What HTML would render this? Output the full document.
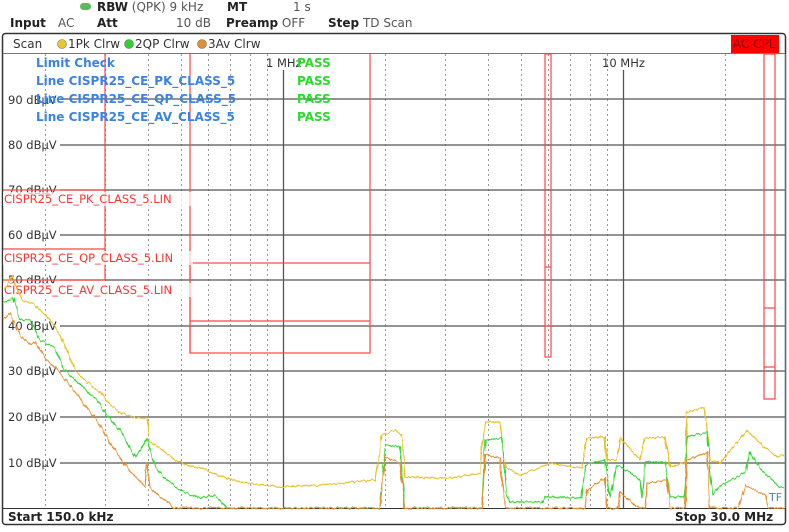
<!DOCTYPE html>
<html><head><meta charset="utf-8"><style>
body{margin:0;background:#fff;width:789px;height:527px;overflow:hidden;font-family:"Liberation Sans","DejaVu Sans",sans-serif}
</style></head><body>
<svg width="789" height="527" viewBox="0 0 789 527" xmlns="http://www.w3.org/2000/svg" font-family="DejaVu Sans, Liberation Sans, sans-serif">
<defs>
<filter id="n" x="-5%" y="-5%" width="110%" height="110%">
<feTurbulence type="fractalNoise" baseFrequency="0.35 0.05" numOctaves="2" seed="3"/>
<feDisplacementMap in="SourceGraphic" scale="4" xChannelSelector="B" yChannelSelector="R"/>
</filter>
</defs>
<rect width="789" height="527" fill="#fff"/>
<!-- header -->
<rect x="80" y="3" width="11" height="7" rx="3.5" fill="#5cb85c"/>
<g font-size="12" fill="#222">
<text x="97" y="11"><tspan font-weight="bold">RBW</tspan> <tspan fill="#555">(QPK) 9 kHz</tspan></text>
<text x="227" y="11" font-weight="bold">MT</text>
<text x="293" y="11" fill="#555">1 s</text>
<text x="10" y="27" font-weight="bold">Input</text>
<text x="58" y="27" fill="#555">AC</text>
<text x="97" y="27" font-weight="bold">Att</text>
<text x="176" y="27" fill="#555">10 dB</text>
<text x="226" y="27"><tspan font-weight="bold">Preamp</tspan> <tspan fill="#555">OFF</tspan></text>
<text x="328" y="27"><tspan font-weight="bold">Step</tspan> <tspan fill="#555">TD Scan</tspan></text>
</g>
<!-- frame -->
<rect x="2.5" y="33.5" width="783" height="491" rx="3" fill="none" stroke="#333" stroke-width="1.5"/>
<line x1="3" y1="53.5" x2="785" y2="53.5" stroke="#777"/>
<line x1="3" y1="508.5" x2="785" y2="508.5" stroke="#333"/>
<line x1="785" y1="54" x2="785" y2="508" stroke="#8ab" />
<text x="13" y="48" font-size="12" fill="#333">Scan</text>
<circle cx="62" cy="44" r="4.5" fill="#e8c830" stroke="#777" stroke-width=".6"/>
<text x="68" y="48" font-size="12" fill="#333">1Pk Clrw</text>
<circle cx="129" cy="44" r="4.5" fill="#30d030" stroke="#777" stroke-width=".6"/>
<text x="135" y="48" font-size="12" fill="#333">2QP Clrw</text>
<circle cx="202" cy="44" r="4.5" fill="#e09030" stroke="#777" stroke-width=".6"/>
<text x="208" y="48" font-size="12" fill="#333">3Av Clrw</text>
<rect x="731" y="35" width="48" height="18" fill="#f00"/>
<text x="733" y="48" font-size="12" fill="#800">AC CPL</text>
<!-- dotted verticals -->
<g stroke="#999" stroke-dasharray="2,3" stroke-width="1">
<line x1="45.5" y1="54" x2="45.5" y2="508"/><line x1="105.5" y1="54" x2="105.5" y2="508"/>
<line x1="148.5" y1="54" x2="148.5" y2="508"/><line x1="181.5" y1="54" x2="181.5" y2="508"/>
<line x1="208.5" y1="54" x2="208.5" y2="508"/><line x1="230.5" y1="54" x2="230.5" y2="508"/>
<line x1="250.5" y1="54" x2="250.5" y2="508"/><line x1="267.5" y1="54" x2="267.5" y2="508"/>
<line x1="385.5" y1="54" x2="385.5" y2="508"/><line x1="445.5" y1="54" x2="445.5" y2="508"/>
<line x1="488.5" y1="54" x2="488.5" y2="508"/><line x1="521.5" y1="54" x2="521.5" y2="508"/>
<line x1="548.5" y1="54" x2="548.5" y2="508"/><line x1="570.5" y1="54" x2="570.5" y2="508"/>
<line x1="590.5" y1="54" x2="590.5" y2="508"/><line x1="607.5" y1="54" x2="607.5" y2="508"/>
<line x1="725.5" y1="54" x2="725.5" y2="508"/>
</g>
<!-- solid grid -->
<g stroke="#555" stroke-width="1.3">
<line x1="60" y1="99" x2="785" y2="99"/><line x1="60" y1="145" x2="785" y2="145"/>
<line x1="60" y1="190" x2="785" y2="190"/><line x1="60" y1="235" x2="785" y2="235"/>
<line x1="60" y1="280" x2="785" y2="280"/><line x1="60" y1="326" x2="785" y2="326"/>
<line x1="60" y1="371" x2="785" y2="371"/><line x1="60" y1="417" x2="785" y2="417"/>
<line x1="60" y1="463" x2="785" y2="463"/>
<line x1="283.5" y1="70" x2="283.5" y2="508"/><line x1="623.5" y1="70" x2="623.5" y2="508"/>
</g>
<g font-size="11.5" fill="#333">
<text x="8" y="104">90 dBµV</text><text x="8" y="149">80 dBµV</text>
<text x="8" y="194">70 dBµV</text><text x="8" y="239">60 dBµV</text>
<text x="8" y="284">50 dBµV</text><text x="8" y="330">40 dBµV</text>
<text x="8" y="375">30 dBµV</text><text x="8" y="421">20 dBµV</text>
<text x="8" y="467">10 dBµV</text>
<text x="266" y="67">1 MHz</text><text x="602" y="67">10 MHz</text>
</g>
<!-- limit lines -->
<g stroke="#f44" stroke-width="1.2" fill="none">
<polyline points="3,190 105,190 105,54"/>
<polyline points="3,249 105,249"/>
<polyline points="3,280 105,280 105,190"/>
<line x1="190" y1="54" x2="190" y2="353"/>
<rect x="190" y="263" width="180" height="90" />
<line x1="190" y1="321" x2="370" y2="321"/>
<line x1="370" y1="54" x2="370" y2="263"/>
<rect x="545" y="54" width="6" height="303"/>
<line x1="545" y1="267" x2="551" y2="267"/><line x1="545" y1="326" x2="551" y2="326"/>
<rect x="764" y="54" width="11" height="345"/>
<line x1="764" y1="308" x2="775" y2="308"/><line x1="764" y1="367" x2="775" y2="367"/>
</g>
<g font-size="11.5" fill="#f33">
<rect x="3" y="192" width="190" height="14" fill="#fff" opacity=".7"/>
<text x="4" y="203">CISPR25_CE_PK_CLASS_5.LIN</text>
<rect x="3" y="251" width="190" height="14" fill="#fff" opacity=".7"/>
<text x="4" y="262">CISPR25_CE_QP_CLASS_5.LIN</text>
<rect x="3" y="283" width="190" height="14" fill="#fff" opacity=".7"/>
<text x="4" y="294">CISPR25_CE_AV_CLASS_5.LIN</text>
</g>
<g font-size="12" font-weight="bold">
<text x="36" y="67" fill="#3b82e6">Limit Check</text>
<text x="36" y="85" fill="#3b82e6">Line CISPR25_CE_PK_CLASS_5</text>
<text x="36" y="103" fill="#3b82e6">Line CISPR25_CE_QP_CLASS_5</text>
<text x="36" y="121" fill="#3b82e6">Line CISPR25_CE_AV_CLASS_5</text>
<text x="297" y="67" fill="#2ed82e">PASS</text>
<text x="297" y="85" fill="#2ed82e">PASS</text>
<text x="297" y="103" fill="#2ed82e">PASS</text>
<text x="297" y="121" fill="#2ed82e">PASS</text>
</g>
<!-- traces -->
<g filter="url(#n)">
<polyline fill="none" stroke="#e8c020" stroke-width="1.2" points="3,290 12,277 22,300 35,305 50,320 60,335 75,370 90,385 100,392 110,405 120,413 135,418 147,418 150,442 162,450 175,460 188,465 200,468 220,476 240,482 260,485 280,487 300,486 320,485 340,484 350,482 375,480 382,435 395,430 402,435 405,477 430,478 450,478 470,475 480,473 485,422 500,422 505,467 520,475 535,470 550,463 565,466 582,468 587,438 605,437 607,460 617,460 620,438 640,460 645,438 665,437 670,467 685,463 687,412 705,408 710,460 720,463 735,445 747,430 755,438 765,448 777,457 784,455"/>
<polyline fill="none" stroke="#30d830" stroke-width="1.2" points="3,303 13,298 20,320 30,320 40,340 55,348 65,370 80,385 97,400 105,413 120,430 135,457 147,438 155,467 165,478 175,487 190,495 200,498 215,495 227,508 345,508 380,508 385,445 400,447 405,508 482,508 485,440 502,438 507,495 510,502 542,502 545,497 582,498 585,465 605,460 610,498 617,465 630,472 640,480 642,498 645,462 665,462 670,497 685,497 687,437 707,432 712,495 722,485 735,478 745,473 750,453 760,468 770,478 780,487 784,488"/>
<polyline fill="none" stroke="#e89030" stroke-width="1.2" points="3,320 10,313 20,335 30,345 35,342 45,358 55,368 70,385 85,405 100,425 110,443 125,465 145,487 147,462 150,487 160,497 170,503 175,508 380,508 385,457 400,463 405,508 482,508 485,455 500,458 505,508 585,508 587,490 605,478 607,508 618,508 620,492 637,507 645,508 647,483 667,480 670,508 685,508 687,460 707,453 710,508 738,508 740,502 745,485 755,490 765,495 768,508 784,508"/>
</g>
<text x="769" y="501" font-size="11" fill="#48a">TF</text>
<!-- footer -->
<text x="8" y="521" font-size="12" font-weight="bold" fill="#222">Start 150.0 kHz</text>
<text x="675" y="521" font-size="12" font-weight="bold" fill="#222">Stop 30.0 MHz</text>
</svg>
</body></html>
